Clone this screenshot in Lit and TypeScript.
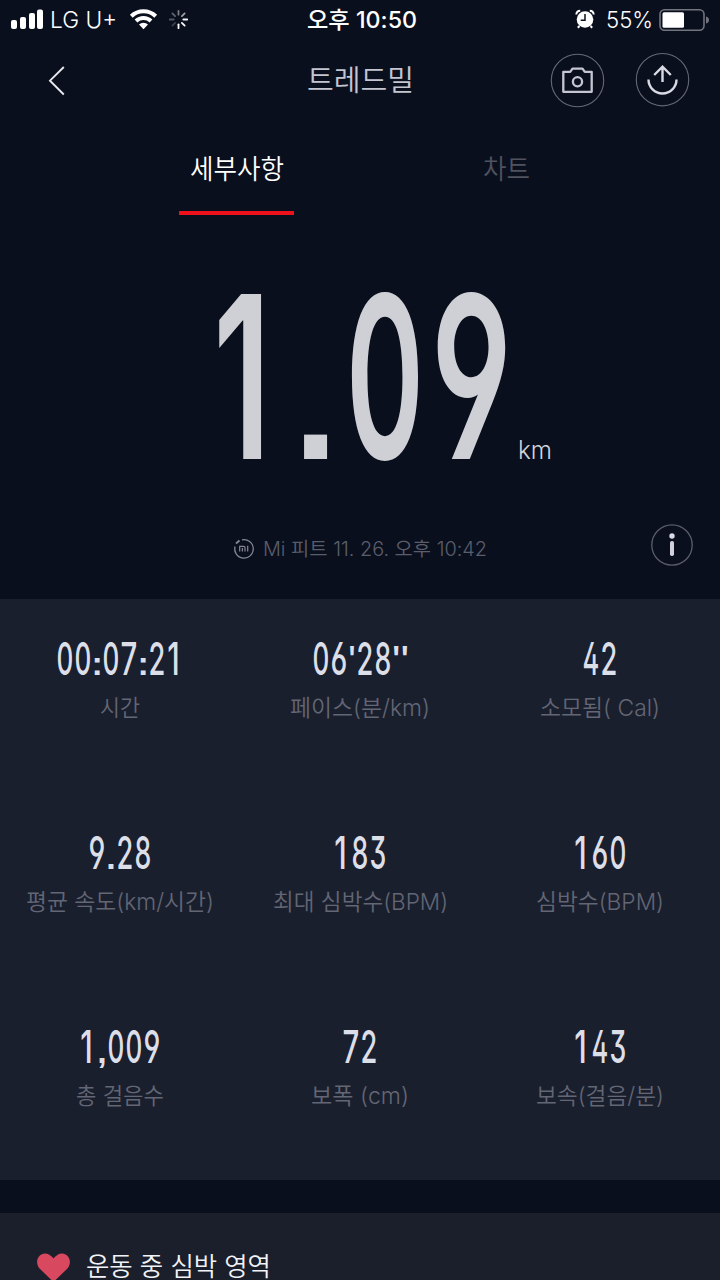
import { LitElement, html, css, svg } from "lit";
import { customElement, property } from "lit/decorators.js";

/** A single line of text fitted to a given advance width. */
@customElement("fit-text")
class FitText extends LitElement {
  @property() text = "";
  @property({ type: Number }) len = 0;
  @property({ type: Number }) h = 30;
  @property({ type: Number }) base = 23;
  static styles = css`
    :host { display: block; flex: none; }
    .line { display: block; overflow: visible; }
    .glyphs { fill: currentColor; white-space: pre; }
  `;
  render() {
    return html`<svg class="line" width=${this.len} height=${this.h}>
      ${svg`<text class="glyphs" x="0" y=${this.base} textLength=${this.len} lengthAdjust="spacingAndGlyphs">${this.text}</text>`}
    </svg>`;
  }
}

/** Narrow figures in even cells, with square punctuation. */
@customElement("narrow-figures")
class NarrowFigures extends LitElement {
  @property() text = "";
  static styles = css`
    :host { display: block; flex: none; }
    .line { display: block; overflow: visible; }
    .digit { fill: currentColor; font: 530 45.5px Inter, sans-serif; font-feature-settings: "ss01", "cv02", "cv03", "cv04"; }
    .dot { font: 700 34px "Liberation Sans", sans-serif; }
    .tick { font: 400 42px "Liberation Sans", sans-serif; }
  `;
  render() {
    const cell = (c: string) => (/\d/.test(c) ? 18 : c === "'" ? 8 : c === '"' ? 17 : 10);
    let at = 0;
    const spans = [...this.text].map(c => {
      const x = at;
      at += cell(c);
      if (c === "1") return svg`<tspan x=${x + 1.2} textLength="12.500" lengthAdjust="spacingAndGlyphs">1</tspan>`;
      if (/\d/.test(c)) return svg`<tspan x=${x + 0.6} textLength="16.800" lengthAdjust="spacingAndGlyphs">${c}</tspan>`;
      if (c === "'" || c === '"') return svg`<tspan class="tick" x=${x} textLength=${cell(c)} lengthAdjust="spacingAndGlyphs">${c}</tspan>`;
      return svg`<tspan class="dot" x=${x + (c === ":" ? -0.6 : 0.3)}>${c}</tspan>`;
    });
    return html`<svg class="line" width=${at} height="50">${svg`<text class="digit" y="39.500">${spans}</text>`}</svg>`;
  }
}

interface Stat { value: string; label: string; lw: number; }

const STATS: Stat[] = [
  { value: "00:07:21", label: "시간", lw: 40 },
  { value: "06'28\"", label: "페이스(분/km)", lw: 140 },
  { value: "42", label: "소모됨( Cal)", lw: 120 },
  { value: "9.28", label: "평균 속도(km/시간)", lw: 188 },
  { value: "183", label: "최대 심박수(BPM)", lw: 175 },
  { value: "160", label: "심박수(BPM)", lw: 128 },
  { value: "1,009", label: "총 걸음수", lw: 88 },
  { value: "72", label: "보폭 (cm)", lw: 98 },
  { value: "143", label: "보속(걸음/분)", lw: 128 },
];

@customElement("app-root")
class AppRoot extends LitElement {
  static styles = css`
    :host {
      display: block; width: 720px; height: 1280px; overflow: hidden;
      background: #0a0f1e; color: #fff;
      font-family: Inter, "Noto Sans CJK KR", sans-serif;
    }
    svg { display: block; flex: none; overflow: visible; }
    .status { display: grid; grid-template-columns: 1fr auto 1fr; height: 40px; }
    .left, .right { display: flex; }
    .left { padding-left: 11px; }
    .carrier { font-size: 23px; font-weight: 350; margin-left: 7px; }
    .wifi { margin-left: 13px; }
    .spin { margin-left: 11px; }
    .clock { font-size: 22.5px; font-weight: 500; padding-left: 3px; }
    .right { justify-content: flex-end; padding-right: 9px; }
    .pct { font-size: 23px; font-weight: 350; margin: 0 6px 0 11px; }
    .header { display: grid; grid-template-columns: 1fr auto 1fr; height: 80px; align-items: start; }
    .back { margin: 26px 0 0 48px; }
    .title { font-size: 29px; font-weight: 350; color: #c3c5d0; margin-top: 20px; }
    .actions { display: flex; justify-content: flex-end; gap: 30px; padding: 13px 30px 0 0; }
    .tabs { display: flex; height: 95px; padding-left: 179px; align-items: flex-start; }
    .tab { display: flex; flex-direction: column; align-items: center; width: 115px; padding-top: 30px; font-size: 27px; font-weight: 350; gap: 21px; }
    .off { margin-left: 155px; color: #4f525f; }
    .bar { width: 115px; height: 4px; background: #ec111a; }
    .hero { display: flex; height: 295px; padding: 65px 0 0 210px; box-sizing: border-box; }
    .big { fill: #cfd0d5; font: 640 227px Inter, sans-serif; font-feature-settings: "cv04"; }
    .point { font: 700 163px "Liberation Sans", sans-serif; }
    .unit { font-size: 25px; font-weight: 300; color: #d3d4da; margin: 150px 0 0 8px; }
    .source { display: grid; grid-template-columns: 234px auto 1fr; height: 89px; align-items: start; }
    .from { display: flex; grid-column: 2; gap: 9px; font-size: 19.5px; font-weight: 350; color: #5a5e6b; padding-top: 28px; }
    .info { justify-self: end; margin: 14px 27px 0 0; }
    .stats { display: grid; grid-template-columns: repeat(3, 240px); grid-auto-rows: 194px; height: 581px; box-sizing: border-box; padding-top: 36px; background: #1a1f2e; }
    .stat { display: flex; flex-direction: column; align-items: center; gap: 8px; }
    .value { color: #dcdee8; }
    .label { font-size: 23px; font-weight: 350; color: #636674; }
    .zone { display: flex; margin-top: 33px; height: 67px; background: #1a1f2b; padding: 40px 0 0 37px; box-sizing: border-box; gap: 16px; }
    .zt { font-size: 26px; font-weight: 350; color: #f2f3f7; }
  `;

  render() {
    const rays = [0, 45, 90, 135, 180, 225, 270, 315];
    const op = [0.45, 0.6, 0.95, 1, 1, 0.2, 0.3, 0.35];
    return html`
      <div class="status">
        <div class="left">
          <svg width="32" height="40" fill="#fff">
            <rect x="0" y="20" width="6" height="9" rx="2"/><rect x="9" y="17" width="6" height="12" rx="2"/>
            <rect x="18" y="13" width="6" height="16" rx="2"/><rect x="26" y="9.500" width="6" height="19.500" rx="2"/>
          </svg>
          <fit-text class="carrier" text="LG U+" len="67" h="40" base="28"></fit-text>
          <svg class="wifi" width="27" height="40" fill="none" stroke="#fff" stroke-width="4">
            <path d="M1.300 16.200A17.500 17.500 0 0 1 25.700 16.200M6 21A10.800 10.800 0 0 1 21 21"/>
            <path d="M13.500 29.200L9 24.600A6.500 6.500 0 0 1 18 24.600Z" fill="#fff" stroke="none"/>
          </svg>
          <svg class="spin" width="20" height="40" stroke="#fff" stroke-width="1.800" stroke-linecap="round">
            ${rays.map((a, i) => svg`<path d="M10.500 14.700V10.800" opacity=${op[i]} transform="rotate(${a} 10.500 19.500)"/>`)}
          </svg>
        </div>
        <fit-text class="clock" text="오후 10:50" len="110" h="40" base="28"></fit-text>
        <div class="right">
          <svg width="20" height="40" fill="none">
            <circle cx="10" cy="19.500" r="8.300" fill="#fff"/>
            <path d="M1.300 14.500A4 4 0 0 1 5.200 10.800M18.700 14.500A4 4 0 0 0 14.800 10.800M4.500 26L2.800 27.800M15.500 26L17.200 27.800" stroke="#fff" stroke-width="2"/>
            <path d="M10 14V20.300H5.700" stroke="#0a0f1e" stroke-width="1.500"/>
          </svg>
          <fit-text class="pct" text="55%" len="47" h="40" base="28"></fit-text>
          <svg width="52" height="40">
            <rect x="1" y="9.800" width="44" height="20.500" rx="4.500" fill="none" stroke="#71747d" stroke-width="1.600"/>
            <rect x="3.500" y="12.300" width="21.500" height="15.500" rx="1.500" fill="#fff"/>
            <path d="M47 16.500Q50 17.500 50 20T47 23.500Z" fill="#71747d"/>
          </svg>
        </div>
      </div>

      <div class="header">
        <svg class="back" width="18" height="30"><path d="M15.800 1L2 14.700L15.800 28.500" fill="none" stroke="#e8e9ee" stroke-width="1.900"/></svg>
        <fit-text class="title" text="트레드밀" len="107" h="40" base="31"></fit-text>
        <div class="actions">
          <svg width="55" height="55" fill="none" stroke="#c5c6d2" stroke-width="2.300" stroke-linejoin="round">
            <circle cx="27.500" cy="27.500" r="26.200" stroke="#666975" stroke-width="1.100"/>
            <path d="M13.300 18.800H20.200L22.500 15.600H32.500L34.800 18.800H41.700V38.800H13.300Z"/><circle cx="27.500" cy="28.700" r="4.600"/>
          </svg>
          <svg width="55" height="55" fill="none" stroke="#d9dae3" stroke-width="2.400">
            <circle cx="27.500" cy="26.700" r="26.200" stroke="#666975" stroke-width="1.100"/>
            <path d="M27.500 29V13.500M19.200 22L27.500 13.700L35.800 22M13.500 26.500A14 14 0 0 0 41.500 26.500"/>
          </svg>
        </div>
      </div>

      <div class="tabs">
        <div class="tab"><fit-text text="세부사항" len="94" h="40" base="28.500"></fit-text><div class="bar"></div></div>
        <div class="tab off"><fit-text text="차트" len="47" h="40" base="28.500"></fit-text></div>
      </div>

      <div class="hero">
        <svg width="300" height="200"><text class="big" y="179"><tspan x="3" textLength="58" lengthAdjust="spacingAndGlyphs">1</tspan><tspan class="point" x="83">.</tspan><tspan x="136" textLength="78" lengthAdjust="spacingAndGlyphs">0</tspan><tspan x="221" textLength="81" lengthAdjust="spacingAndGlyphs">9</tspan></text></svg>
        <fit-text class="unit" text="km" len="34" h="40" base="29"></fit-text>
      </div>

      <div class="source">
        <div class="from">
          <svg width="20" height="30" fill="none" stroke="#858894" stroke-width="1.200">
            <path d="M8 1.800A9.300 9.300 0 1 1 1 8.500"/><path d="M2 5.500L5.500 2.500" stroke-width="1.800"/>
            <path d="M5.700 13.500V8.300H9.500Q11 8.300 11 9.800V13.500M8.400 10V13.500M13.700 7.700V13.500"/>
          </svg>
          <fit-text text="Mi 피트 11. 26. 오후 10:42" len="224" h="30" base="17.500"></fit-text>
        </div>
        <svg class="info" width="42" height="42">
          <circle cx="21" cy="21" r="20.200" fill="none" stroke="#5c5e6b" stroke-width="1.300"/>
          <circle cx="21" cy="12" r="2.700" fill="#d9dae4"/><rect x="19" y="17" width="4" height="15" rx="1.800" fill="#d0d1dc"/>
        </svg>
      </div>

      <div class="stats">
        ${STATS.map(s => html`<div class="stat">
          <narrow-figures class="value" .text=${s.value}></narrow-figures>
          <fit-text class="label" .text=${s.label} .len=${s.lw} .h=${30} .base=${23}></fit-text>
        </div>`)}
      </div>

      <div class="zone">
        <svg width="33" height="28"><path d="M16.500 29L2.500 15.500C-4 7 4-3 12 1.500Q15 3.500 16.500 5.500Q18 3.500 21 1.500C29-3 37 7 30.500 15.500Z" fill="#d8485f"/></svg>
        <fit-text class="zt" text="운동 중 심박 영역" len="185" h="28" base="23"></fit-text>
      </div>
    `;
  }
}
